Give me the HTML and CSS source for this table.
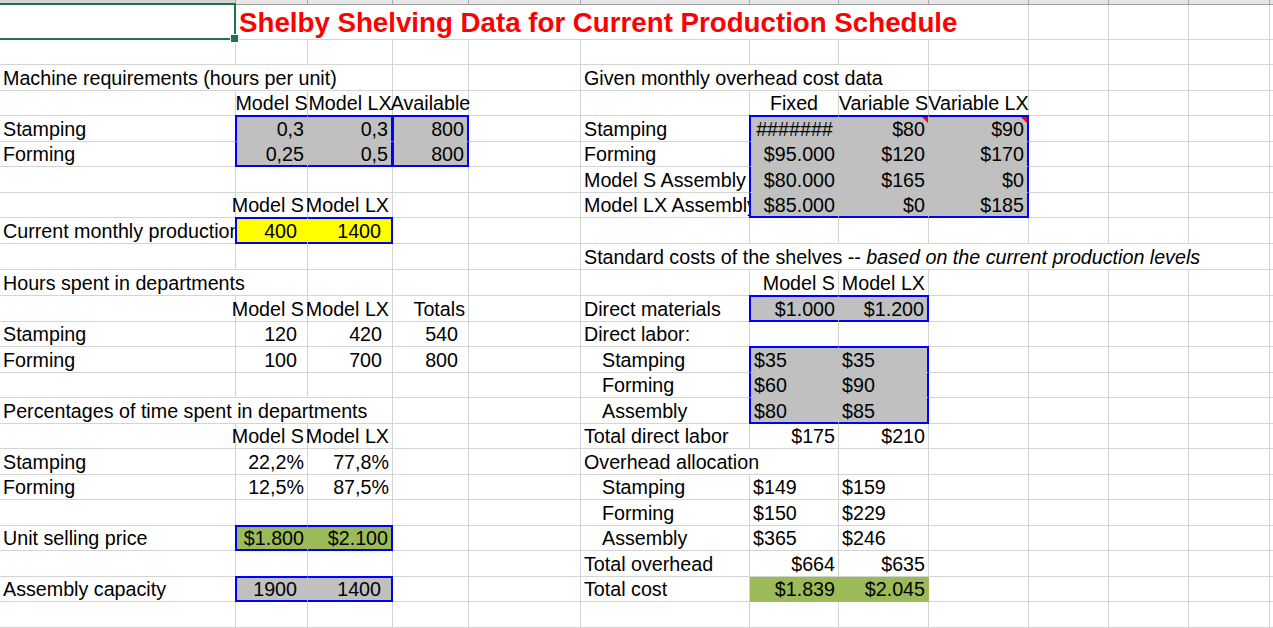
FILE: index.html
```html
<!DOCTYPE html>
<html lang="en">
<head>
<meta charset="utf-8">
<title>Shelby Shelving Data for Current Production Schedule</title>
<link rel="stylesheet" href="styles.css">
</head>
<body>
<div class="sheet">
  <!-- column header strip (cut off) -->
  <div class="hd sel"></div><div class="hd"></div><div class="hd"></div><div class="hd"></div><div class="hd"></div><div class="hd"></div><div class="hd"></div><div class="hd"></div><div class="hd"></div><div class="hd"></div><div class="hd"></div><div class="hd"></div><div class="hd"></div>

  <!-- row 1 -->
  <div class="active"></div>
  <div class="title s8">Shelby Shelving Data for Current Production Schedule</div>
  <div></div><div></div><div></div><div></div>

  <!-- row 2 -->
  <div></div><div></div><div></div><div></div><div></div><div></div><div></div><div></div><div></div><div></div><div></div><div></div><div></div>

  <!-- row 3 -->
  <div class="s3">Machine requirements (hours per unit)</div>
  <div></div><div></div>
  <div class="s3">Given monthly overhead cost data</div>
  <div></div><div></div><div></div><div></div><div></div>

  <!-- row 4 -->
  <div></div>
  <div class="ctr">Model S</div><div class="ctr">Model LX</div><div class="ctr">Available</div>
  <div></div><div></div>
  <div class="ctr">Fixed</div><div class="ctr">Variable S</div><div class="ctr">Variable LX</div>
  <div></div><div></div><div></div><div></div>

  <!-- row 5 -->
  <div>Stamping</div>
  <div class="ra gray bt bl">0,3</div><div class="ra gray bt br">0,3</div><div class="ra gray bt bl br">800</div>
  <div></div>
  <div>Stamping</div>
  <div class="ctr gray bt bl">#######</div><div class="ra gray bt cm">$80</div><div class="ra gray bt br cm">$90</div>
  <div></div><div></div><div></div><div></div>

  <!-- row 6 -->
  <div>Forming</div>
  <div class="ra gray bl bb">0,25</div><div class="ra gray br bb">0,5</div><div class="ra gray bl br bb">800</div>
  <div></div>
  <div>Forming</div>
  <div class="ra gray bl">$95.000</div><div class="ra gray">$120</div><div class="ra gray br">$170</div>
  <div></div><div></div><div></div><div></div>

  <!-- row 7 -->
  <div></div><div></div><div></div><div></div><div></div>
  <div>Model S Assembly</div>
  <div class="ra gray bl">$80.000</div><div class="ra gray">$165</div><div class="ra gray br">$0</div>
  <div></div><div></div><div></div><div></div>

  <!-- row 8 -->
  <div></div>
  <div class="ra">Model S</div><div class="ra">Model LX</div>
  <div></div><div></div>
  <div class="clip">Model LX Assembly</div>
  <div class="ra gray bl bb">$85.000</div><div class="ra gray bb">$0</div><div class="ra gray br bb">$185</div>
  <div></div><div></div><div></div><div></div>

  <!-- row 9 -->
  <div class="clip">Current monthly production</div>
  <div class="ra pad yel bt bl bb">400</div><div class="ra pad yel bt br bb">1400</div>
  <div></div><div></div><div></div><div></div><div></div><div></div><div></div><div></div><div></div><div></div>

  <!-- row 10 -->
  <div></div><div></div><div></div><div></div><div></div>
  <div class="s7">Standard costs of the shelves --&nbsp;<em>based on the current production levels</em></div>
  <div></div>

  <!-- row 11 -->
  <div class="s2">Hours spent in departments</div>
  <div></div><div></div><div></div><div></div>
  <div class="ra">Model S</div><div class="ra">Model LX</div>
  <div></div><div></div><div></div><div></div><div></div>

  <!-- row 12 -->
  <div></div>
  <div class="ra">Model S</div><div class="ra">Model LX</div><div class="ra">Totals</div>
  <div></div>
  <div>Direct materials</div>
  <div class="ra gray bt bl bb">$1.000</div><div class="ra gray bt br bb">$1.200</div>
  <div></div><div></div><div></div><div></div><div></div>

  <!-- row 13 -->
  <div>Stamping</div>
  <div class="ra pad">120</div><div class="ra pad">420</div><div class="ra pad">540</div>
  <div></div>
  <div>Direct labor:</div>
  <div></div><div></div><div></div><div></div><div></div><div></div><div></div>

  <!-- row 14 -->
  <div>Forming</div>
  <div class="ra pad">100</div><div class="ra pad">700</div><div class="ra pad">800</div>
  <div></div>
  <div class="ind">Stamping</div>
  <div class="gray bt bl">$35</div><div class="gray bt br">$35</div>
  <div></div><div></div><div></div><div></div><div></div>

  <!-- row 15 -->
  <div></div><div></div><div></div><div></div><div></div>
  <div class="ind">Forming</div>
  <div class="gray bl">$60</div><div class="gray br">$90</div>
  <div></div><div></div><div></div><div></div><div></div>

  <!-- row 16 -->
  <div class="s3">Percentages of time spent in departments</div>
  <div></div><div></div>
  <div class="ind">Assembly</div>
  <div class="gray bl bb">$80</div><div class="gray br bb">$85</div>
  <div></div><div></div><div></div><div></div><div></div>

  <!-- row 17 -->
  <div></div>
  <div class="ra">Model S</div><div class="ra">Model LX</div>
  <div></div><div></div>
  <div>Total direct labor</div>
  <div class="ra">$175</div><div class="ra">$210</div>
  <div></div><div></div><div></div><div></div><div></div>

  <!-- row 18 -->
  <div>Stamping</div>
  <div class="ra">22,2%</div><div class="ra">77,8%</div>
  <div></div><div></div>
  <div class="s2">Overhead allocation</div>
  <div></div><div></div><div></div><div></div><div></div><div></div>

  <!-- row 19 -->
  <div>Forming</div>
  <div class="ra">12,5%</div><div class="ra">87,5%</div>
  <div></div><div></div>
  <div class="ind">Stamping</div>
  <div>$149</div><div>$159</div>
  <div></div><div></div><div></div><div></div><div></div>

  <!-- row 20 -->
  <div></div><div></div><div></div><div></div><div></div>
  <div class="ind">Forming</div>
  <div>$150</div><div>$229</div>
  <div></div><div></div><div></div><div></div><div></div>

  <!-- row 21 -->
  <div>Unit selling price</div>
  <div class="ra grn bt bl bb">$1.800</div><div class="ra grn bt br bb">$2.100</div>
  <div></div><div></div>
  <div class="ind">Assembly</div>
  <div>$365</div><div>$246</div>
  <div></div><div></div><div></div><div></div><div></div>

  <!-- row 22 -->
  <div></div><div></div><div></div><div></div><div></div>
  <div>Total overhead</div>
  <div class="ra">$664</div><div class="ra">$635</div>
  <div></div><div></div><div></div><div></div><div></div>

  <!-- row 23 -->
  <div>Assembly capacity</div>
  <div class="ra pad gray bt bl bb">1900</div><div class="ra pad gray bt br bb">1400</div>
  <div></div><div></div>
  <div>Total cost</div>
  <div class="ra grn">$1.839</div><div class="ra grn">$2.045</div>
  <div></div><div></div><div></div><div></div><div></div>

  <!-- row 24 -->
  <div></div><div></div><div></div><div></div><div></div><div></div><div></div><div></div><div></div><div></div><div></div><div></div><div></div>
</div>
</body>
</html>
```
FILE: styles.css
```css
* { box-sizing: border-box; }

html, body {
  margin: 0;
  background: #fff;
}

body {
  font-family: "Liberation Sans", Arial, sans-serif;
  font-size: 19.7px;
  color: #000;
  overflow: hidden;
}

.sheet {
  display: grid;
  width: 1273px;
  height: 628px;
  overflow: hidden;
  grid-template-columns: 236px 72px 85px 76px 112px 169px 89px 90px 100px 80px 80px 81px 1fr;
  grid-template-rows:
    5px 35px
    25px 26px 25px 26px 25px 26px 25px 26px 26px 26px 26px 25px
    26px 25px 26px 25px 26px 25px 26px 25px 26px 25px 26px;
}

.sheet > div {
  display: flex;
  align-items: flex-end;
  justify-content: flex-start;
  min-width: 0;
  padding: 0 3px 0;
  white-space: nowrap;
  border-right: 1px solid #d4d4d4;
  border-bottom: 1px solid #d4d4d4;
}

/* column header strip */
.sheet > .hd {
  background: #e6e6e6;
  border-right-color: #a8a8a8;
  border-bottom-color: #9e9e9e;
}
.sheet > .hd.sel {
  background: #d2d2d2;
  border-bottom: 2px solid #217346;
}

/* active cell A1 */
.sheet > .active {
  position: relative;
}
.active::before {
  content: "";
  position: absolute;
  left: -3px;
  top: -2px;
  right: -1px;
  bottom: -1px;
  border: 2px solid #217346;
  z-index: 3;
}
.active::after {
  content: "";
  position: absolute;
  right: -4px;
  bottom: -4px;
  width: 7px;
  height: 7px;
  background: #217346;
  border: 1px solid #fff;
  z-index: 4;
}

.sheet > .title {
  font-size: 27.7px;
  font-weight: bold;
  color: #ff0000;
  padding-bottom: 0;
}

/* spans for overflowing text */
.sheet > .s2 { grid-column: span 2; }
.sheet > .s3 { grid-column: span 3; }
.sheet > .s7 { grid-column: span 7; }
.sheet > .s8 { grid-column: span 8; }

.sheet > .clip { overflow: hidden; }

/* alignment */
.sheet > .ra { justify-content: flex-end; }
.sheet > .ctr { justify-content: center; }
.sheet > .pad { padding-right: 10px; }
.sheet > .ind { padding-left: 21px; }

/* fills */
.sheet > .gray { background: #c0c0c0; border-color: #c0c0c0; }
.sheet > .yel { background: #ffff00; border-color: #ffff00; }
.sheet > .grn { background: #9bbb59; border-color: #9bbb59; }

/* blue range borders */
.sheet > .bt { border-top: 2px solid #0000ff; margin-top: -1px; }
.sheet > .bl { border-left: 2px solid #0000ff; margin-left: -1px; }
.sheet > .br { border-right: 2px solid #0000ff; }
.sheet > .bb { border-bottom-color: #0000ff; box-shadow: inset 0 -1px 0 #0000ff; }

/* comment indicator */
.sheet > .cm { position: relative; }
.cm::after {
  content: "";
  position: absolute;
  top: 0;
  right: 0;
  border-top: 6px solid #ff0000;
  border-left: 6px solid transparent;
}

em { font-style: italic; }
```
